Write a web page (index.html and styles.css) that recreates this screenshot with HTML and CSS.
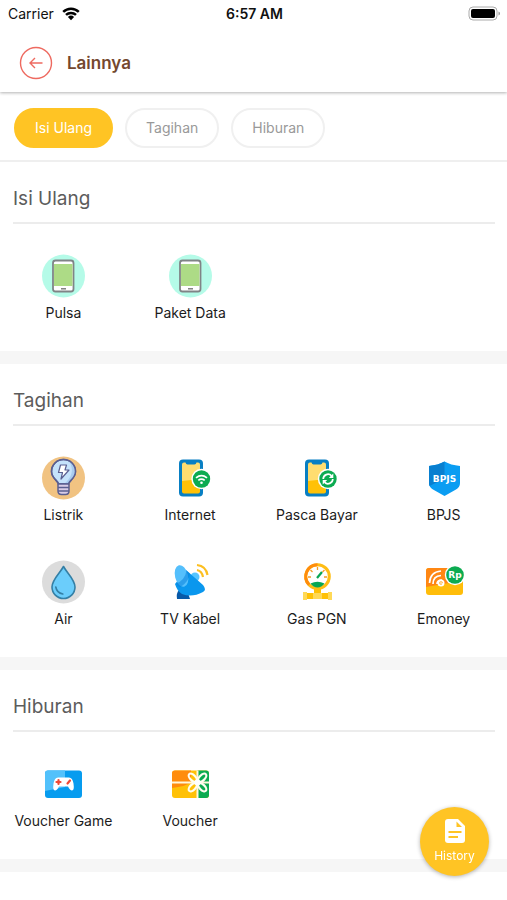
FILE: index.html
```html
<!DOCTYPE html>
<html lang="id">
<head>
<meta charset="utf-8">
<meta name="viewport" content="width=device-width, initial-scale=1">
<title>Lainnya</title>
<link rel="stylesheet" href="styles.css">
</head>
<body>
<div class="status">
  <div class="status-carrier">
    <span>Carrier</span>
    <svg width="18" height="14" viewBox="0 0 18 14" aria-hidden="true">
      <path d="M1.2 4.9a11.2 11.2 0 0 1 15.6 0M4 7.9a7.2 7.2 0 0 1 10 0" fill="none" stroke="#000" stroke-width="2.5"/>
      <path d="M9 13.2 5.9 9.9a4.5 4.5 0 0 1 6.2 0z"/>
    </svg>
  </div>
  <div class="status-time">6:57 AM</div>
  <div class="status-battery">
    <svg width="33" height="16" viewBox="0 0 33 16" aria-hidden="true">
      <rect x="1" y="1" width="28" height="13" rx="4" fill="#fff" stroke="#aaa"/>
      <rect x="3" y="3" width="24" height="9" rx="2"/>
      <path d="M30.5 5.5v4q1.5-.5 1.5-2t-1.5-2z" fill="#999"/>
    </svg>
  </div>
</div>
<header class="header">
  <button class="back" type="button" aria-label="Kembali">
    <svg width="34" height="34" viewBox="0 0 34 34" aria-hidden="true">
      <circle cx="17" cy="17" r="15.5"/>
      <path d="M23.5 17H11M16 12l-5 5 5 5"/>
    </svg>
  </button>
  <h1>Lainnya</h1>
</header>
<nav class="tabs">
  <button class="tab tab-active" type="button">Isi Ulang</button>
  <button class="tab" type="button">Tagihan</button>
  <button class="tab" type="button">Hiburan</button>
</nav>
<main>
  <section class="section">
    <h2>Isi Ulang</h2>
    <div class="grid">
      <a class="item" href="#pulsa">
        <svg class="icon" viewBox="0 0 44 44" aria-hidden="true">
          <circle cx="22.5" cy="22" r="21.5" fill="#b5fbe8"/>
          <rect x="12" y="6.5" width="20.5" height="31" rx="2.5" fill="#fff" stroke="#808486" stroke-width="1.8"/>
          <path d="M13 10h18.5v22H13z" fill="#addb86"/>
          <path d="M20 34.8h5" stroke="#777" stroke-width="1.4"/>
        </svg>
        <span>Pulsa</span>
      </a>
      <a class="item" href="#paket-data">
        <svg class="icon" viewBox="0 0 44 44" aria-hidden="true">
          <circle cx="22.5" cy="22" r="21.5" fill="#b5fbe8"/>
          <rect x="12" y="6.5" width="20.5" height="31" rx="2.5" fill="#fff" stroke="#808486" stroke-width="1.8"/>
          <path d="M13 10h18.5v22H13z" fill="#addb86"/>
          <path d="M20 34.8h5" stroke="#777" stroke-width="1.4"/>
        </svg>
        <span>Paket Data</span>
      </a>
    </div>
  </section>
  <section class="section">
    <h2>Tagihan</h2>
    <div class="grid">
      <a class="item" href="#listrik">
        <svg class="icon" viewBox="0 0 44 44" aria-hidden="true">
          <circle cx="22.5" cy="22" r="21.5" fill="#f1c382"/>
          <g stroke="#5b5f91" stroke-width="1.5" stroke-linejoin="round">
            <path d="M17.5 28c0-3-7-5.5-7-12.5a12 12 0 0 1 24 0c0 7-7 9.5-7 12.5z" fill="#c5e2fb"/>
            <path d="M23 28h4.5c0-3 7-5.5 7-12.5A12 12 0 0 0 28 5c6 10 2 17-5 23z" fill="#a9ccf0" stroke="none"/>
            <path d="M17.5 28c0-3-7-5.5-7-12.5a12 12 0 0 1 24 0c0 7-7 9.5-7 12.5z" fill="none"/>
            <path d="M17 28h11v7q0 3.5-3.5 3.5h-4Q17 38.5 17 35z" fill="#d9cce7"/>
            <path d="M17 31.5h11M17 35h11"/>
            <path d="M19.5 9h6L24 14h4l-8 9 1.5-6.5h-4z" fill="#fff" stroke-width="1.2"/>
          </g>
        </svg>
        <span>Listrik</span>
      </a>
      <a class="item" href="#internet">
        <svg class="icon" viewBox="0 0 44 44" aria-hidden="true">
          <rect x="11" y="3.5" width="24" height="37" rx="4" fill="#087fc3"/>
          <path d="M14 8.5q0-2 2-2h1.5q.5 2 2 2h7q1.5 0 2-2H30q2 0 2 2V25H14z" fill="#ffdd70"/>
          <path d="M14 25l18-2v12.5q0 2-2 2H16q-2 0-2-2z" fill="#ffc107"/>
          <circle cx="33.5" cy="23" r="10.2" fill="#fff"/>
          <circle cx="33.5" cy="23" r="8.7" fill="#0cab51"/>
          <path d="M28 21.8q5.5-4.500 11 0M30.3 24.4q3.2-2.500 6.400 0" fill="none" stroke="#fff" stroke-width="1.7"/>
          <circle cx="33.5" cy="26.8" r="1.3" fill="#fff"/>
        </svg>
        <span>Internet</span>
      </a>
      <a class="item" href="#pasca-bayar">
        <svg class="icon" viewBox="0 0 44 44" aria-hidden="true">
          <rect x="10" y="3.5" width="24" height="37" rx="4" fill="#087fc3"/>
          <path d="M13 8.5q0-2 2-2h1.5q.5 2 2 2h7q1.5 0 2-2H29q2 0 2 2V25H13z" fill="#ffdd70"/>
          <path d="M13 25l18-2v12.5q0 2-2 2H15q-2 0-2-2z" fill="#ffc107"/>
          <circle cx="33" cy="23" r="10.2" fill="#fff"/>
          <circle cx="33" cy="23" r="8.7" fill="#0cab51"/>
          <path d="M28.2 23a4.8 4.8 0 0 1 8.3-3.2M37.8 23a4.8 4.8 0 0 1-8.3 3.2" fill="none" stroke="#fff" stroke-width="1.7"/>
          <path d="M38.3 17.5V22h-4.5zM27.7 28.5V24h4.5z" fill="#fff"/>
        </svg>
        <span>Pasca Bayar</span>
      </a>
      <a class="item" href="#bpjs">
        <svg class="icon" viewBox="0 0 44 44" aria-hidden="true">
          <path d="M22.5 5.5q6 3.5 15.5 4.5v17q0 4-4 6.500L22.500 40 11 33.500q-4-2.500-4-6.500V10q9.500-1 15.500-4.500z" fill="#0a9df2"/>
          <path d="M22.5 5.5v17L7.5 30Q7 29 7 27V10q9.5-1 15.5-4.500z" fill="#087fd0"/>
          <text class="mark" x="22.5" y="25.5">BPJS</text>
        </svg>
        <span>BPJS</span>
      </a>
      <a class="item" href="#air">
        <svg class="icon" viewBox="0 0 44 44" aria-hidden="true">
          <circle cx="22.5" cy="22" r="21.5" fill="#dcdcdc"/>
          <path d="M22.5 6.5C19 13 11 19.5 11 27a11.5 11.5 0 0 0 23 0c0-7.500-8-14-11.500-20.500z" fill="#6bcdfb" stroke="#347fa5" stroke-width="1.6" stroke-linejoin="round"/>
          <path d="M14.8 27q1 6 7 7" fill="none" stroke="#347fa5" stroke-width="1.6" stroke-linecap="round"/>
        </svg>
        <span>Air</span>
      </a>
      <a class="item" href="#tv-kabel">
        <svg class="icon" viewBox="0 0 44 44" aria-hidden="true">
          <path d="M11 30h8l3 9H9q-1-6 2-9z" fill="#0759a8"/>
          <circle cx="27" cy="17" r="4.5" fill="#55c5ff"/>
          <path d="M18 10l17 15q4 5 0 7-11 6-21 2-5-3-7-10z" fill="#0a97ee"/>
          <ellipse cx="13.5" cy="16" rx="6.5" ry="11" transform="rotate(-14 13.5 16)" fill="#54bffc"/>
          <path d="M18.500 10.500l3.500 3q-1 8-10 14-2.500-1-4-4 9-3 10.500-13z" fill="#0a84dc" opacity=".55"/>
          <path d="M29 10q5 1 6 7M29 5q9 1 10.500 10" fill="none" stroke="#fcbf21" stroke-width="2.2"/>
        </svg>
        <span>TV Kabel</span>
      </a>
      <a class="item" href="#gas-pgn">
        <svg class="icon" viewBox="0 0 44 44" aria-hidden="true">
          <path d="M19 29h7v4h11v6H8v-6h11z" fill="#ffc107"/>
          <path d="M8 32h4v8H8zM33 32h4v8h-4zM18 33h9v6h-9z" fill="#ffd957"/>
          <circle cx="22.5" cy="16.5" r="11.8" fill="#fff" stroke="#ffbd14" stroke-width="3"/>
          <path d="M14.2 24.8A11.8 11.8 0 0 1 22.5 4.7" fill="none" stroke="#ff8c0c" stroke-width="3"/>
          <path d="M22.5 7v3M15.5 10l2 2M29.5 10l-2 2M13 17h3M32 17h-3" stroke="#f29c26" stroke-width="1.3"/>
          <path d="M22 18l5-6" stroke="#08a654" stroke-width="2.2"/>
          <path d="M15.5 23.5q7-3.5 14 0-3 4-7 4t-7-4z" fill="#08a654"/>
        </svg>
        <span>Gas PGN</span>
      </a>
      <a class="item" href="#emoney">
        <svg class="icon" viewBox="0 0 44 44" aria-hidden="true">
          <rect x="4" y="8" width="37" height="27" rx="3" fill="#ffbd0a"/>
          <path d="M4 27V11q0-3 3-3h20v15z" fill="#ff8713"/>
          <path d="M7.5 23Q8 12 19 11M11 24q0-8 8-8.5M15 24q0-4 5-4" fill="none" stroke="#fff" stroke-width="1.7"/>
          <circle cx="19" cy="23" r="3.5" fill="#fff"/>
          <path d="M17.5 23h3q0-1.5-1.5-1.5T17.5 23q0 2 2.5 1.3" fill="none" stroke="#ffab22" stroke-width=".7"/>
          <circle cx="33" cy="15" r="10.2" fill="#fff"/>
          <circle cx="33" cy="15" r="8.8" fill="#0cab51"/>
          <text class="mark" x="33" y="18">Rp</text>
        </svg>
        <span>Emoney</span>
      </a>
    </div>
  </section>
  <section class="section">
    <h2>Hiburan</h2>
    <div class="grid">
      <a class="item" href="#voucher-game">
        <svg class="icon" viewBox="0 0 44 44" aria-hidden="true">
          <rect x="4" y="8.5" width="37" height="27.5" rx="3" fill="#079cef"/>
          <path d="M4 29V11.5q0-3 3-3h17V25z" fill="#52c1fb"/>
          <path d="M17 15.5h11q3.500 0 4.500 6 1 7-1.500 7-2 0-4-4h-9q-2 4-4 4-2.500 0-1.500-7 1-6 4.500-6z" fill="#fff"/>
          <path d="M17.5 18v4M15.5 20h4M26.5 21.5l2.500-3" stroke="#ef4937" stroke-width="2.2" stroke-linecap="round"/>
        </svg>
        <span>Voucher Game</span>
      </a>
      <a class="item" href="#voucher">
        <svg class="icon" viewBox="0 0 44 44" aria-hidden="true">
          <rect x="4" y="8.5" width="37" height="27.5" rx="3" fill="#ffc107"/>
          <path d="M29.5 8.5H38q3 0 3 3V33q0 3-3 3h-8.500z" fill="#0cab51"/>
          <path d="M4 26V11.5q0-3 3-3h16v12q-6 4-19 5.500z" fill="#ff8c0c"/>
          <path d="M4 20.5h37M29.5 8.5V36" stroke="#fff8dc" stroke-width="2"/>
          <g fill="none" stroke="#fffdf0" stroke-width="2.2">
            <ellipse cx="24.7" cy="15.7" rx="5" ry="2.7" transform="rotate(45 24.7 15.7)"/>
            <ellipse cx="34.3" cy="15.7" rx="5" ry="2.7" transform="rotate(-45 34.3 15.7)"/>
            <ellipse cx="24.7" cy="25.3" rx="5" ry="2.7" transform="rotate(-45 24.7 25.3)"/>
            <ellipse cx="34.3" cy="25.3" rx="5" ry="2.7" transform="rotate(45 34.3 25.3)"/>
          </g>
          <circle cx="29.5" cy="20.5" r="3" fill="#fff"/>
        </svg>
        <span>Voucher</span>
      </a>
    </div>
  </section>
</main>
<button class="history" type="button">
  <svg width="20" height="24" viewBox="0 0 20 24" aria-hidden="true">
    <path d="M3 0h10l7 7v14q0 3-3 3H3q-3 0-3-3V3q0-3 3-3z" fill="#fff"/>
    <path d="M11.5 2.5V8H17zM3.5 12h13v2h-13zM3.5 17h9.500v2H3.500z" fill="#ffc424"/>
  </svg>
  <span>History</span>
</button>
</body>
</html>
```
FILE: styles.css
```css
* {
  box-sizing: border-box;
}

body {
  margin: 0;
  min-height: 100vh;
  background: #fff;
  color: #1c1c1c;
  font-family: Inter, "Liberation Sans", sans-serif;
  font-size: 14px;
  line-height: 20px;
}

button {
  padding: 0;
  border: 0;
  background: none;
  font: inherit;
  cursor: pointer;
}

svg {
  display: block;
}

.status {
  display: grid;
  grid-template-columns: 1fr auto 1fr;
  align-items: center;
  height: 28px;
  padding: 0 6px 0 8px;
  color: #111;
}

.status-carrier {
  display: flex;
  align-items: center;
  gap: 8px;
}

.status-time {
  font-weight: 600;
}

.status-battery {
  justify-self: end;
}

.header {
  display: flex;
  align-items: center;
  gap: 14px;
  height: 64px;
  padding: 6px 19px 0;
  box-shadow: 0 1px 3px rgba(0, 0, 0, 0.3);
  clip-path: inset(0 0 -6px 0);
}

.back circle,
.back path {
  fill: none;
  stroke: #ee6a60;
  stroke-width: 1.4;
}

h1 {
  margin: 0;
  color: #74482f;
  font-size: 17px;
  font-weight: 600;
  line-height: 24px;
}

.tabs {
  display: flex;
  gap: 12px;
  padding: 16px 14px 12px;
  border-bottom: 2px solid #efefef;
}

.tab {
  height: 40px;
  padding: 0 19px;
  border: 2px solid #f0f0f0;
  border-radius: 20px;
  color: #999;
}

.tab-active {
  border-color: #ffc424;
  background: #ffc424;
  color: #fff;
}

.section {
  padding: 25px 0 28px;
  border-bottom: 13px solid #f6f6f6;
}

h2 {
  margin: 0 12px 30px 13px;
  padding-bottom: 11px;
  border-bottom: 2px solid #ececec;
  color: #5c5c5c;
  font-size: 19px;
  font-weight: 400;
  line-height: 24px;
}

.grid {
  display: grid;
  grid-template-columns: repeat(4, 1fr);
  row-gap: 35px;
}

.item {
  display: flex;
  flex-direction: column;
  align-items: center;
  gap: 5px;
  color: inherit;
  text-decoration: none;
  white-space: nowrap;
}

.icon {
  width: 44px;
  height: 44px;
}

.mark {
  fill: #fff;
  font-family: "DejaVu Sans", sans-serif;
  font-size: 9px;
  font-weight: 700;
  text-anchor: middle;
}

.history {
  position: fixed;
  right: 18px;
  bottom: 24px;
  display: flex;
  flex-direction: column;
  align-items: center;
  justify-content: center;
  gap: 3px;
  width: 69px;
  height: 69px;
  padding-top: 2px;
  border-radius: 50%;
  background: #ffc424;
  box-shadow: 0 1px 4px rgba(0, 0, 0, 0.3);
  color: #fff;
  font-size: 12px;
}
```
